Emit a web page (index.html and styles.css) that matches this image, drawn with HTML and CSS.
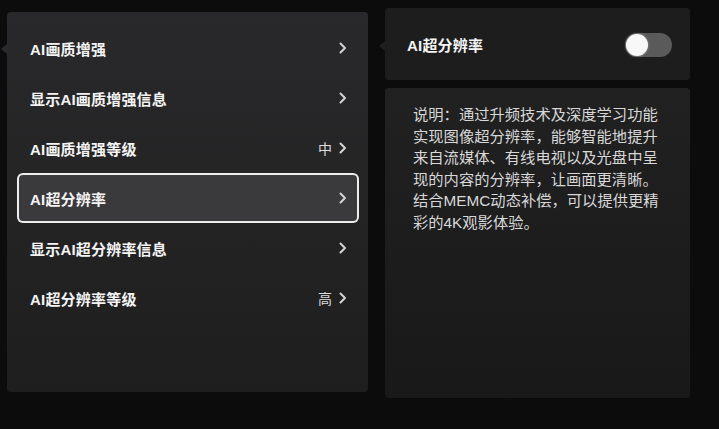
FILE: index.html
```html
<!DOCTYPE html>
<html lang="zh-CN">
<head>
<meta charset="utf-8">
<title>AI超分辨率</title>
<link rel="stylesheet" href="styles.css">
</head>
<body>
<div class="screen">
  <div class="menu">
    <span class="notch notch-left"></span>
    <div class="row"><span class="label">AI画质增强</span><span class="right"><svg class="chev" viewBox="0 0 8 12"><path d="M1.5 1.5 L6 6 L1.5 10.5"/></svg></span></div>
    <div class="row"><span class="label">显示AI画质增强信息</span><span class="right"><svg class="chev" viewBox="0 0 8 12"><path d="M1.5 1.5 L6 6 L1.5 10.5"/></svg></span></div>
    <div class="row"><span class="label">AI画质增强等级</span><span class="right"><span class="value">中</span><svg class="chev" viewBox="0 0 8 12"><path d="M1.5 1.5 L6 6 L1.5 10.5"/></svg></span></div>
    <div class="row selected"><span class="label">AI超分辨率</span><span class="right"><svg class="chev" viewBox="0 0 8 12"><path d="M1.5 1.5 L6 6 L1.5 10.5"/></svg></span></div>
    <div class="row"><span class="label">显示AI超分辨率信息</span><span class="right"><svg class="chev" viewBox="0 0 8 12"><path d="M1.5 1.5 L6 6 L1.5 10.5"/></svg></span></div>
    <div class="row"><span class="label">AI超分辨率等级</span><span class="right"><span class="value">高</span><svg class="chev" viewBox="0 0 8 12"><path d="M1.5 1.5 L6 6 L1.5 10.5"/></svg></span></div>
  </div>
  <div class="side">
    <div class="toggle-card">
      <span class="notch notch-card"></span>
      <span class="label">AI超分辨率</span>
      <span class="switch"><span class="knob"></span></span>
    </div>
    <div class="desc-card">
      <p class="desc">说明：通过升频技术及深度学习功能实现图像超分辨率，能够智能地提升来自流媒体、有线电视以及光盘中呈现的内容的分辨率，让画面更清晰。结合MEMC动态补偿，可以提供更精彩的4K观影体验。</p>
    </div>
  </div>
</div>
</body>
</html>
```

FILE: styles.css
```css
html, body {
  margin: 0;
  padding: 0;
  background: #0c0c0d;
  width: 719px;
  height: 429px;
  overflow: hidden;
  font-family: "Liberation Sans", "Noto Sans CJK SC", sans-serif;
}

.screen {
  display: flex;
  align-items: flex-start;
  padding-left: 7px;
}

.menu {
  position: relative;
  margin-top: 12px;
  width: 361px;
  height: 380px;
  box-sizing: border-box;
  padding: 11px 9px 0 10px;
  background: linear-gradient(180deg, #29292b 0%, #242425 50%, #1e1e1f 100%);
  border-radius: 4px;
}

.notch {
  position: absolute;
  width: 0;
  height: 0;
  border-top: 5px solid transparent;
  border-bottom: 5px solid transparent;
}

.notch-left {
  left: -6px;
  top: 32px;
  border-right: 6px solid #2a2a2b;
}

.notch-card {
  left: -6px;
  top: 33px;
  border-right: 6px solid #1f1f20;
}

.row {
  height: 50px;
  box-sizing: border-box;
  display: flex;
  align-items: center;
  justify-content: space-between;
  padding: 0 12px 0 13px;
  border-radius: 6px;
}

.row .label {
  color: #f4f4f4;
  font-size: 15px;
  font-weight: 700;
  letter-spacing: 0.2px;
}

.row.selected {
  background: #3a393c;
  box-shadow: inset 0 0 0 2px #ededed;
}

.right {
  display: flex;
  align-items: center;
  gap: 7px;
}

.value {
  color: #dcdcdc;
  font-size: 14px;
}

.chev {
  width: 8px;
  height: 12px;
  fill: none;
  stroke: #d4d4d4;
  stroke-width: 2;
  stroke-linecap: round;
  stroke-linejoin: round;
}

.side {
  display: flex;
  flex-direction: column;
  gap: 8px;
  margin-left: 17px;
  margin-top: 8px;
  width: 305px;
}

.toggle-card {
  position: relative;
  height: 72px;
  box-sizing: border-box;
  display: flex;
  align-items: center;
  justify-content: space-between;
  padding: 0 18px 0 22px;
  background: #1d1d1e;
  border-radius: 4px;
}

.toggle-card .label {
  color: #f4f4f4;
  font-size: 15px;
  font-weight: 700;
  letter-spacing: 0.2px;
}

.switch {
  width: 47px;
  height: 24px;
  border-radius: 12px;
  background: #5a5a5b;
  display: flex;
  align-items: center;
  margin-top: 1px;
}

.knob {
  width: 22px;
  height: 22px;
  border-radius: 50%;
  background: #f8f8f8;
  margin-left: 1px;
  box-shadow: 0 0 3px rgba(255, 255, 255, 0.4);
}

.desc-card {
  height: 310px;
  box-sizing: border-box;
  padding: 16px 26px 0 28px;
  background: linear-gradient(180deg, #212122 0%, #1c1c1d 60%, #19191a 100%);
  border-radius: 4px;
}

.desc {
  margin: 0;
  color: #d8d8d8;
  font-size: 15.3px;
  line-height: 21.5px;
  word-break: break-all;
}
```
